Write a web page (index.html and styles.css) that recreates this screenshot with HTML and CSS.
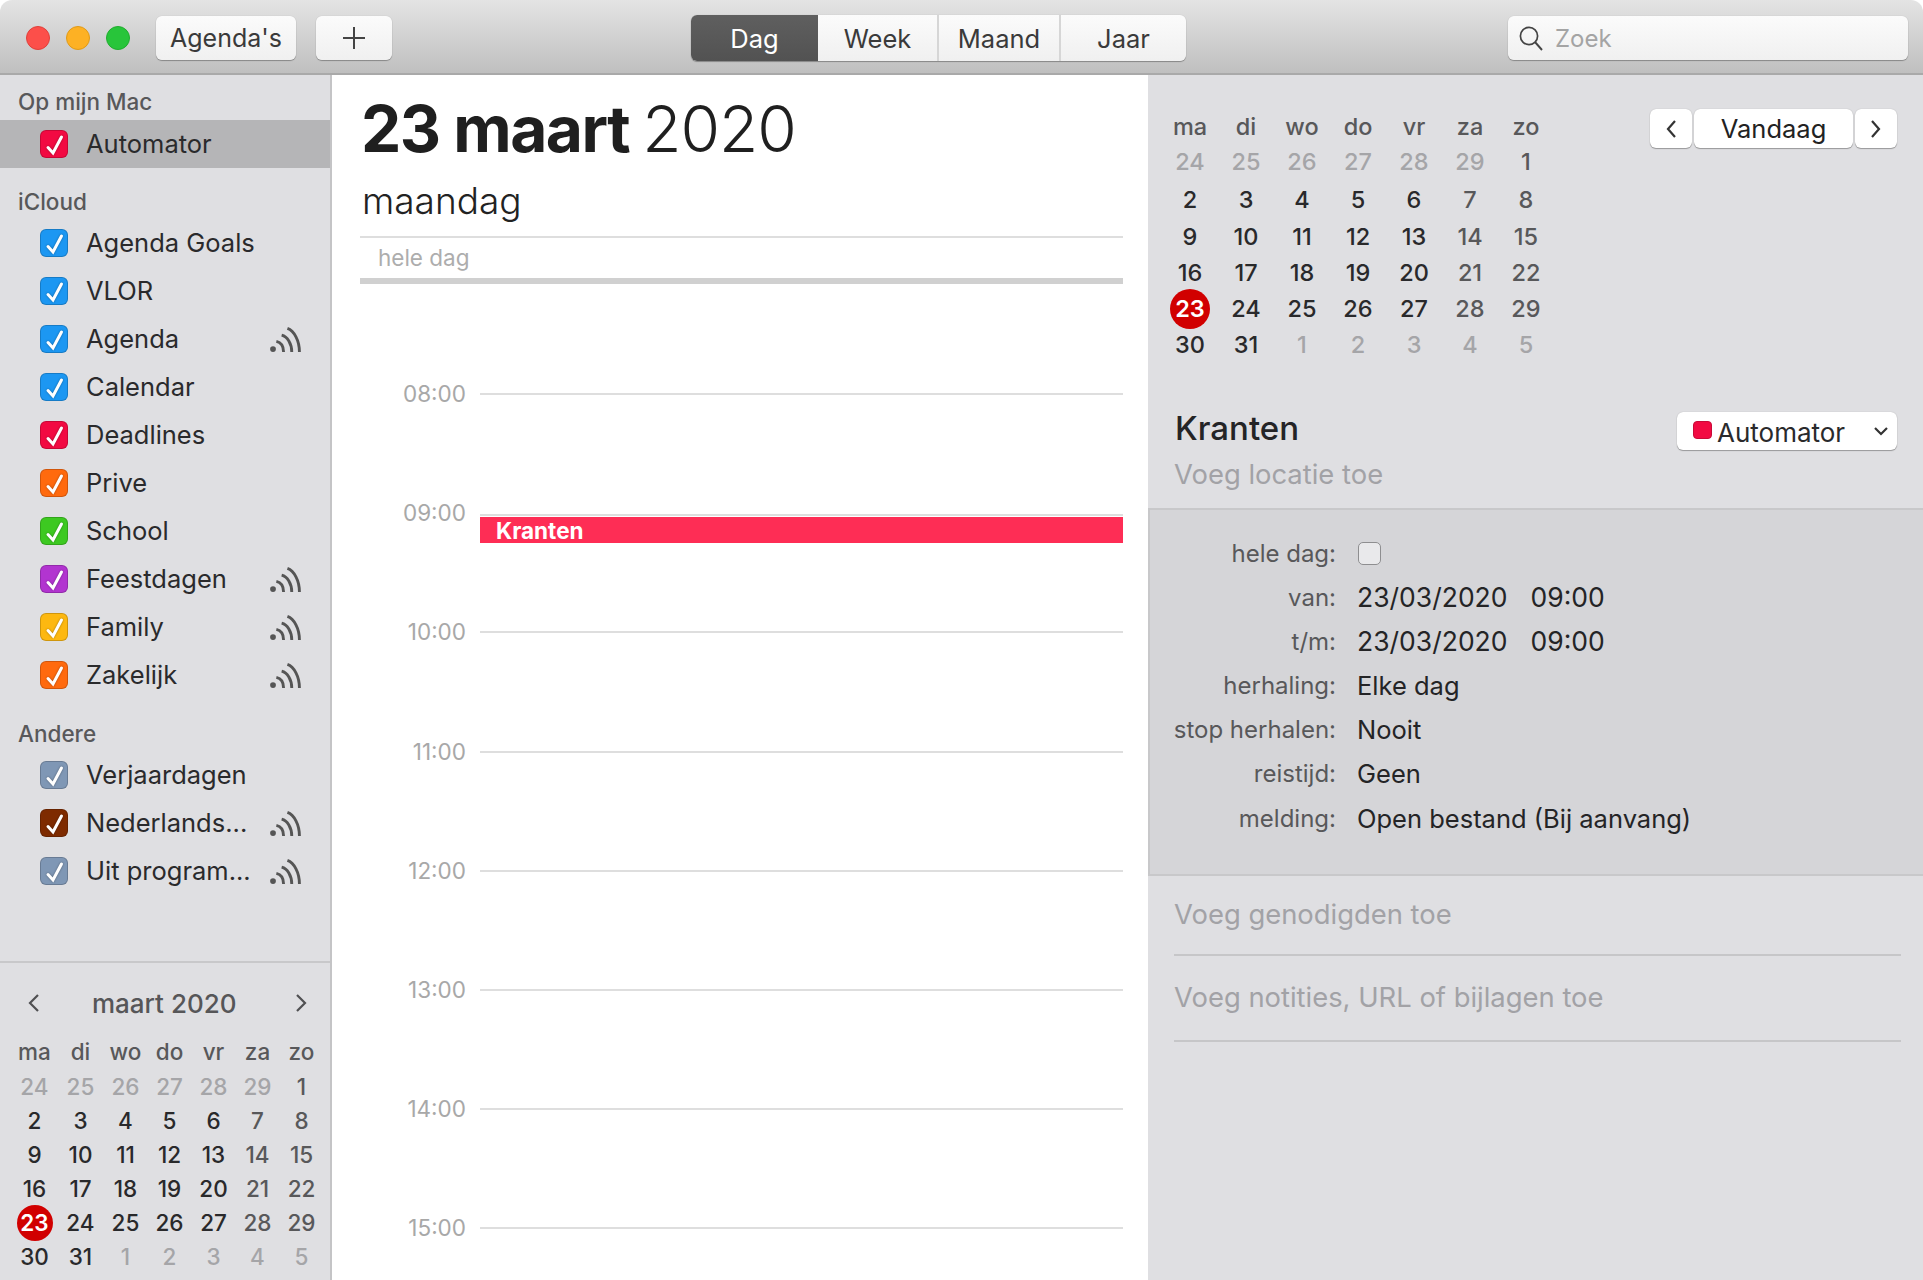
FILE: index.html
```html
<!DOCTYPE html>
<html>
<head>
<meta charset="utf-8">
<title>Agenda</title>
<link rel="stylesheet" href="styles.css">
</head>
<body>
<div class="window">
	<div class="toolbar">
		<div class="lights"><i class="red"></i><i class="yellow"></i><i class="green"></i></div>
		<div class="btn agendas">Agenda's</div>
		<div class="btn add"><svg width="22" height="22" viewBox="0 0 22 22"><path d="M11 0v22M0 11h22" stroke="#444" stroke-width="2" fill="none"/></svg></div>
		<div class="tabs">
			<div class="tab on">Dag</div>
			<div class="tab wk">Week</div>
			<div class="tab mn">Maand</div>
			<div class="tab yr">Jaar</div>
		</div>
		<div class="search">
			<svg width="26" height="26" viewBox="0 0 26 26"><circle cx="11" cy="11" r="8.6" stroke="#444" stroke-width="1.7" fill="none"/><path d="M17 17l7 8" stroke="#444" stroke-width="1.9" fill="none"/></svg>
			<span>Zoek</span>
		</div>
	</div>

	<div class="columns">
		<div class="sidebar">
			<div class="lists">
				<div class="group first">Op mijn Mac</div>
				<div class="row sel"><span class="chk c-red"><svg viewBox="0 0 28 28"><path d="M8 17.500l5 5.500L21.500 7"/></svg></span><span class="name">Automator</span></div>

				<div class="group">iCloud</div>
				<div class="row"><span class="chk c-blue"><svg viewBox="0 0 28 28"><path d="M8 17.500l5 5.500L21.500 7"/></svg></span><span class="name">Agenda Goals</span></div>
				<div class="row"><span class="chk c-blue"><svg viewBox="0 0 28 28"><path d="M8 17.500l5 5.500L21.500 7"/></svg></span><span class="name">VLOR</span></div>
				<div class="row"><span class="chk c-blue"><svg viewBox="0 0 28 28"><path d="M8 17.500l5 5.500L21.500 7"/></svg></span><span class="name">Agenda</span><svg class="feed" viewBox="0 0 32 26"><circle cx="3" cy="23" r="3"/><path d="M6.500 15C11 16 14 20 14 26M12 8.500C18 10 22.500 17 22.500 26M18 1.500C25 4 30.500 14 30.500 26"/></svg></div>
				<div class="row"><span class="chk c-blue"><svg viewBox="0 0 28 28"><path d="M8 17.500l5 5.500L21.500 7"/></svg></span><span class="name">Calendar</span></div>
				<div class="row"><span class="chk c-red"><svg viewBox="0 0 28 28"><path d="M8 17.500l5 5.500L21.500 7"/></svg></span><span class="name">Deadlines</span></div>
				<div class="row"><span class="chk c-orange"><svg viewBox="0 0 28 28"><path d="M8 17.500l5 5.500L21.500 7"/></svg></span><span class="name">Prive</span></div>
				<div class="row"><span class="chk c-green"><svg viewBox="0 0 28 28"><path d="M8 17.500l5 5.500L21.500 7"/></svg></span><span class="name">School</span></div>
				<div class="row"><span class="chk c-purple"><svg viewBox="0 0 28 28"><path d="M8 17.500l5 5.500L21.500 7"/></svg></span><span class="name">Feestdagen</span><svg class="feed" viewBox="0 0 32 26"><circle cx="3" cy="23" r="3"/><path d="M6.500 15C11 16 14 20 14 26M12 8.500C18 10 22.500 17 22.500 26M18 1.500C25 4 30.500 14 30.500 26"/></svg></div>
				<div class="row"><span class="chk c-yellow"><svg viewBox="0 0 28 28"><path d="M8 17.500l5 5.500L21.500 7"/></svg></span><span class="name">Family</span><svg class="feed" viewBox="0 0 32 26"><circle cx="3" cy="23" r="3"/><path d="M6.500 15C11 16 14 20 14 26M12 8.500C18 10 22.500 17 22.500 26M18 1.500C25 4 30.500 14 30.500 26"/></svg></div>
				<div class="row"><span class="chk c-orange"><svg viewBox="0 0 28 28"><path d="M8 17.500l5 5.500L21.500 7"/></svg></span><span class="name">Zakelijk</span><svg class="feed" viewBox="0 0 32 26"><circle cx="3" cy="23" r="3"/><path d="M6.500 15C11 16 14 20 14 26M12 8.500C18 10 22.500 17 22.500 26M18 1.500C25 4 30.500 14 30.500 26"/></svg></div>

				<div class="group other">Andere</div>
				<div class="row"><span class="chk c-slate"><svg viewBox="0 0 28 28"><path d="M8 17.500l5 5.500L21.500 7"/></svg></span><span class="name">Verjaardagen</span></div>
				<div class="row"><span class="chk c-brown"><svg viewBox="0 0 28 28"><path d="M8 17.500l5 5.500L21.500 7"/></svg></span><span class="name">Nederlands...</span><svg class="feed" viewBox="0 0 32 26"><circle cx="3" cy="23" r="3"/><path d="M6.500 15C11 16 14 20 14 26M12 8.500C18 10 22.500 17 22.500 26M18 1.500C25 4 30.500 14 30.500 26"/></svg></div>
				<div class="row"><span class="chk c-slate"><svg viewBox="0 0 28 28"><path d="M8 17.500l5 5.500L21.500 7"/></svg></span><span class="name">Uit program...</span><svg class="feed" viewBox="0 0 32 26"><circle cx="3" cy="23" r="3"/><path d="M6.500 15C11 16 14 20 14 26M12 8.500C18 10 22.500 17 22.500 26M18 1.500C25 4 30.500 14 30.500 26"/></svg></div>
			</div>

			<div class="minical">
				<div class="mini-head">
					<svg width="14" height="20" viewBox="0 0 14 20"><path d="M11 2L3 10l8 8"/></svg>
					<span>maart 2020</span>
					<svg width="14" height="20" viewBox="0 0 14 20"><path d="M3 2l8 8-8 8"/></svg>
				</div>
				<div class="cal cal-small">
					<b>ma</b><b>di</b><b>wo</b><b>do</b><b>vr</b><b>za</b><b>zo</b>
					<s>24</s><s>25</s><s>26</s><s>27</s><s>28</s><s>29</s><em>1</em>
					<span>2</span><span>3</span><span>4</span><span>5</span><span>6</span><em>7</em><em>8</em>
					<span>9</span><span>10</span><span>11</span><span>12</span><span>13</span><em>14</em><em>15</em>
					<span>16</span><span>17</span><span>18</span><span>19</span><span>20</span><em>21</em><em>22</em>
					<span><u>23</u></span><span>24</span><span>25</span><span>26</span><span>27</span><em>28</em><em>29</em>
					<span>30</span><span>31</span><s>1</s><s>2</s><s>3</s><s>4</s><s>5</s>
				</div>
			</div>
		</div>

		<div class="day">
			<h1><strong>23 maart</strong> 2020</h1>
			<div class="weekday">maandag</div>
			<div class="allday">hele dag</div>
			<div class="hours">
				<div class="hour"><span>08:00</span><i></i></div>
				<div class="hour nine"><span>09:00</span><i></i><div class="event">Kranten</div></div>
				<div class="hour"><span>10:00</span><i></i></div>
				<div class="hour"><span>11:00</span><i></i></div>
				<div class="hour"><span>12:00</span><i></i></div>
				<div class="hour"><span>13:00</span><i></i></div>
				<div class="hour"><span>14:00</span><i></i></div>
				<div class="hour"><span>15:00</span><i></i></div>
			</div>
		</div>

		<div class="detail">
			<div class="detail-top">
				<div class="cal cal-big">
					<b>ma</b><b>di</b><b>wo</b><b>do</b><b>vr</b><b>za</b><b>zo</b>
					<s>24</s><s>25</s><s>26</s><s>27</s><s>28</s><s>29</s><em>1</em>
					<span>2</span><span>3</span><span>4</span><span>5</span><span>6</span><em>7</em><em>8</em>
					<span>9</span><span>10</span><span>11</span><span>12</span><span>13</span><em>14</em><em>15</em>
					<span>16</span><span>17</span><span>18</span><span>19</span><span>20</span><em>21</em><em>22</em>
					<span><u>23</u></span><span>24</span><span>25</span><span>26</span><span>27</span><em>28</em><em>29</em>
					<span>30</span><span>31</span><s>1</s><s>2</s><s>3</s><s>4</s><s>5</s>
				</div>
				<div class="nav">
					<div class="nav-btn arrow"><svg width="12" height="20" viewBox="0 0 12 20"><path d="M10 2L3 10l7 8"/></svg></div>
					<div class="nav-btn today">Vandaag</div>
					<div class="nav-btn arrow"><svg width="12" height="20" viewBox="0 0 12 20"><path d="M2 2l7 8-7 8"/></svg></div>
				</div>
			</div>

			<div class="title-row">
				<div class="ev-title">Kranten</div>
				<div class="select"><i></i><span>Automator</span><svg width="16" height="10" viewBox="0 0 16 10"><path d="M2 2l6 6 6-6"/></svg></div>
			</div>
			<div class="placeholder location">Voeg locatie toe</div>

			<div class="props">
				<div class="prop"><label>hele dag:</label><span class="box"></span></div>
				<div class="prop"><label>van:</label><div class="when"><span>23/03/2020</span><span>09:00</span></div></div>
				<div class="prop"><label>t/m:</label><div class="when"><span>23/03/2020</span><span>09:00</span></div></div>
				<div class="prop"><label>herhaling:</label><div>Elke dag</div></div>
				<div class="prop"><label>stop herhalen:</label><div>Nooit</div></div>
				<div class="prop"><label>reistijd:</label><div>Geen</div></div>
				<div class="prop"><label>melding:</label><div>Open bestand (Bij aanvang)</div></div>
			</div>

			<div class="placeholder invite">Voeg genodigden toe</div>
			<div class="placeholder notes">Voeg notities, URL of bijlagen toe</div>
		</div>
	</div>
</div>
</body>
</html>
```

FILE: styles.css
```css
html, body{margin:0;padding:0;background:#fff;}
body{font-family:Inter,"Liberation Sans",sans-serif;font-size:25.5px;color:#2a2a2c;}
.window{width:1923px;height:1280px;overflow:hidden;border-radius:12px 12px 0 0;display:flex;flex-direction:column;}

/* toolbar */
.toolbar{
	height:75px;
	flex:none;
	display:flex;
	align-items:center;
	padding:3px 15px 0 26px;
	box-sizing:border-box;
	border-bottom:2px solid #a9a9a9;
	background:linear-gradient(#e4e4e4,#bfbfbf);
	color:#3a3a3a;
}
.lights{display:flex;gap:16px;margin-right:26px;}
.lights i{width:24px;height:24px;border-radius:50%;display:block;box-sizing:border-box;}
.red{background:#fc4f4a;border:1px solid #e0403a;}
.yellow{background:#fdb124;border:1px solid #e09a18;}
.green{background:#28c53a;border:1px solid #20ad2e;}
.btn,.tabs,.search{
	height:44px;
	box-sizing:border-box;
	border-radius:6px;
	background:linear-gradient(#fbfbfb,#f0f0f0);
	box-shadow:0 1px 1px rgba(0,0,0,.3),0 0 1px rgba(0,0,0,.2);
	display:flex;
	align-items:center;
	justify-content:center;
}
.agendas{width:140px;margin-right:20px;font-size:25px;}
.add{width:76px;}
.tabs{width:495px;margin-left:299px;height:46px;justify-content:flex-start;overflow:hidden;}
.tab{height:100%;display:flex;align-items:center;justify-content:center;border-right:2px solid #d6d6d6;box-sizing:border-box;}
.tab.on{width:127px;background:linear-gradient(#5f5f5f,#525252);color:#fff;border:0;}
.tab.wk{width:121px;}
.tab.mn{width:122px;}
.tab.yr{flex:1;border:0;}
.search{width:400px;margin-left:auto;justify-content:flex-start;padding-left:10px;gap:11px;color:#a4a4a4;font-size:24px;}

/* columns */
.columns{flex:1;display:flex;min-height:0;}

/* sidebar */
.sidebar{
	width:332px;
	flex:none;
	box-sizing:border-box;
	border-right:2px solid #c4c4c6;
	background:#dfdfe2;
	display:flex;
	flex-direction:column;
}
.lists{height:888px;flex:none;box-sizing:border-box;border-bottom:2px solid #c8c8ca;}
.group{height:38px;line-height:41px;padding-left:18px;margin-top:13px;font-size:22.5px;font-weight:500;color:#58585a;}
.group.first{height:45px;line-height:54px;margin-top:0;}
.group.other{margin-top:14px;}
.row{height:48px;display:flex;align-items:center;padding-left:40px;padding-right:29px;}
.row.sel{background:#b5b5b7;}
.chk{width:28px;height:28px;border-radius:6px;box-sizing:border-box;border:1px solid rgba(0,0,0,.18);flex:none;margin-right:18px;}
.chk svg{display:block;width:28px;height:28px;margin:-1px;filter:drop-shadow(0 0 1px rgba(0,0,0,.35));}
.chk path{fill:none;stroke:#fff;stroke-width:3;stroke-linecap:round;}
.c-red{background:#f20a42;}
.c-blue{background:#1c97f2;}
.c-orange{background:#ff6a0e;}
.c-green{background:#3dc921;}
.c-purple{background:#b234d0;}
.c-yellow{background:#fdb810;}
.c-slate{background:#7f97b5;}
.c-brown{background:#7e2b00;}
.name{flex:1;white-space:nowrap;margin-bottom:2px;}
.feed{width:31px;height:25px;flex:none;}
.feed circle{fill:#555;}
.feed path{fill:none;stroke:#555;stroke-width:3;}

/* mini calendars */
.cal{display:grid;text-align:center;}
.cal b{font-weight:500;color:#58585a;}
.cal s{text-decoration:none;color:#a5a5a8;}
.cal em{font-style:normal;color:#58585a;}
.cal span{color:#29292b;}
.cal u{text-decoration:none;display:inline-block;background:#d10000;color:#fff;border-radius:50%;font-weight:600;text-align:center;}
.minical{flex:1;padding:0 7px 0 11.5px;}
.mini-head{height:78px;display:flex;align-items:center;justify-content:space-between;padding:2px 15px 0 15px;box-sizing:border-box;font-size:26px;font-weight:500;color:#565658;}
.mini-head svg path{fill:none;stroke:#505052;stroke-width:2.2;}
.mini-head span{margin-right:6px;}
.cal-small{
	font-size:22.5px;
	font-weight:500;
	grid-template-columns:46px 46px repeat(5,44px);
	grid-template-rows:35px repeat(6,34px);
	line-height:34px;
	margin-top:-6px;
}
.cal-small u{width:36px;height:36px;line-height:36px;margin-top:-1px;}

/* day view */
.day{width:816px;flex:none;background:#fff;padding-left:28px;padding-right:25px;box-sizing:border-box;}
h1{margin:0;font-size:64px;font-weight:300;line-height:78px;padding:15px 0 0 1px;color:#1f1f1f;letter-spacing:-1px;}
h1 strong{font-weight:700;letter-spacing:-1.5px;margin-right:-4px;}
.weekday{font-size:37px;line-height:50px;padding:8px 0 0 2px;color:#222;font-weight:350;}
.allday{height:40px;margin-top:10px;line-height:40px;padding-left:18px;border-top:2px solid #dedede;border-bottom:6px solid #d0d0d0;font-size:22.5px;color:#adadad;}
.hours{padding-top:99px;}
.hour{height:119.2px;position:relative;display:flex;align-items:flex-start;}
.hour span{width:106px;text-align:right;font-size:22.5px;line-height:26px;margin-top:-2px;color:#a8a8a8;flex:none;}
.hour i{display:block;height:2px;background:#dedede;flex:1;margin-left:14px;margin-top:10px;}
.hour.nine i{margin-top:12px;}
.event{position:absolute;left:120px;right:0;top:15px;height:26px;line-height:27px;padding-left:16px;background:#fe2d55;color:#fff;font-size:22.5px;font-weight:700;}

/* detail panel */
.detail{flex:1;background:#dfdfe2;min-width:0;}
.detail-top{display:flex;height:311px;padding:34px 26px 0 14px;box-sizing:border-box;justify-content:space-between;align-items:flex-start;}
.cal-big{
	font-size:23.5px;
	font-weight:500;
	grid-template-columns:repeat(7,56px);
	grid-template-rows:35px 38px 37px 36px 36px 36px 36px;
	line-height:36px;
}
.cal-big u{width:40px;height:40px;line-height:40px;margin-top:-2px;}
.nav{display:flex;gap:2px;}
.nav-btn{height:39px;background:#fff;border-radius:6px;box-shadow:0 1px 1px rgba(0,0,0,.3),0 0 1px rgba(0,0,0,.25);display:flex;align-items:center;justify-content:center;color:#222;}
.nav-btn path,.select path{fill:none;stroke:#333;stroke-width:2.2;}
.arrow{width:42px;}
.today{width:159px;}
.title-row{display:flex;justify-content:space-between;align-items:flex-start;padding:26px 26px 0 27px;height:46px;}
.ev-title{font-size:33px;font-weight:500;line-height:42px;color:#242426;margin-top:-5px;}
.select{width:220px;height:38px;box-sizing:border-box;background:#fff;border-radius:6px;box-shadow:0 1px 1px rgba(0,0,0,.3),0 0 1px rgba(0,0,0,.25);display:flex;align-items:center;padding:0 8px 0 16px;font-size:26px;}
.select i{width:19px;height:18px;background:#f20a42;border-radius:4px;border:1px solid #c80a38;box-sizing:border-box;margin-right:5px;margin-top:-2px;}
.select span{flex:1;margin-top:2px;}
.placeholder{color:#a2a2a6;padding-left:26px;font-size:27.4px;}
.location{line-height:40px;margin-top:-4px;}
.props{
	margin-top:14px;
	height:368px;
	box-sizing:border-box;
	padding-top:22px;
	background:#d5d5d8;
	border:2px solid #c8c8ca;
	border-width:2px 0 2px 2px;
}
.prop{height:44px;display:flex;align-items:center;gap:21px;color:#242426;}
.prop:first-child{height:43px;}
.prop:last-child{margin-top:1px;}
.prop label{width:186px;text-align:right;color:#58585a;flex:none;font-size:24px;}
.when{display:flex;gap:23px;font-size:26.5px;}
.box{width:23px;height:23px;margin-left:1px;border-radius:5px;background:#e9e9eb;border:1px solid #8e8e90;box-sizing:border-box;}
.invite{margin:0 22px 0 26px;padding:0;height:80px;line-height:76px;border-bottom:2px solid #c6c6c8;box-sizing:border-box;}
.notes{margin:0 22px 0 26px;padding:0;height:86px;line-height:82px;border-bottom:2px solid #c6c6c8;box-sizing:border-box;}
```
